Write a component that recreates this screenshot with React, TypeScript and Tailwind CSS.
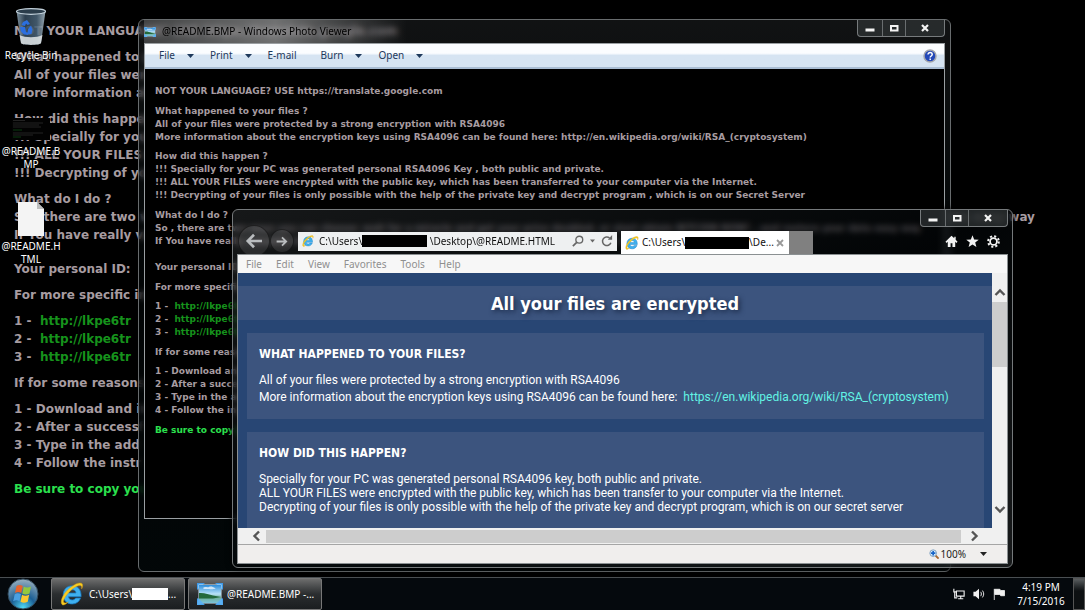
import type { ReactNode } from "react";

type Line = string | { text: string; green?: boolean; prefix?: string };

const note: Line[][] = [
  ["NOT YOUR LANGUAGE? USE https://translate.google.com"],
  [
    "What happened to your files ?",
    "All of your files were protected by a strong encryption with RSA4096",
    "More information about the encryption keys using RSA4096 can be found here: http://en.wikipedia.org/wiki/RSA_(cryptosystem)",
  ],
  [
    "How did this happen ?",
    "!!! Specially for your PC was generated personal RSA4096 Key , both public and private.",
    "!!! ALL YOUR FILES were encrypted with the public key, which has been transferred to your computer via the Internet.",
    "!!! Decrypting of your files is only possible with the help of the private key and decrypt program , which is on our Secret Server",
  ],
  [
    "What do I do ?",
    "So , there are two ways you can choose: wait for a miracle and get your price doubled, or start obtain BITCOIN NOW! , and restore your data easy way",
    "If You have really valuable data, you better not waste your time, because there is no other way to get your files",
  ],
  ["Your personal ID:"],
  ["For more specific inst"],
  [
    { prefix: "1 -", text: "http://lkpe6tr" },
    { prefix: "2 -", text: "http://lkpe6tr" },
    { prefix: "3 -", text: "http://lkpe6tr" },
  ],
  ["If for some reasons"],
  ["1 - Download and in", "2 - After a successf", "3 - Type in the add", "4 - Follow the instr"],
  [{ text: "Be sure to copy you", green: true }],
];

const ui = "font-['Noto_Sans','Open_Sans',sans-serif]";

function NoteText({ className }: { className: string }) {
  return (
    <div className={`font-['DejaVu_Sans',sans-serif] font-bold whitespace-nowrap text-[#a79ca1] ${className}`}>
      {note.map((lines, i) => (
        <div key={i}>
          {lines.map((line, j) => {
            if (typeof line === "string") return <p key={j}>{line}</p>;
            if (line.green) return <p key={j} className="text-[#2be04e]">{line.text}</p>;
            return (
              <p key={j}>
                {line.prefix}&nbsp; <span className="text-[#16931c]">{line.text}</span>
              </p>
            );
          })}
        </div>
      ))}
    </div>
  );
}

function Caret({ className = "w-[7px]" }: { className?: string }) {
  return (
    <svg viewBox="0 0 7 4" className={`h-1 ${className}`} aria-hidden="true">
      <path d="M0 0h7L3.5 4z" fill="currentColor" />
    </svg>
  );
}

function WindowButtons() {
  const cell = "flex h-4 items-center justify-center border-r border-[#6a6e70]";
  return (
    <div className="flex rounded-b-[4px] border border-t-0 border-[#777b7d] bg-[#303436]/70">
      <button aria-label="Minimize" className={`${cell} w-[25px]`}>
        <svg viewBox="0 0 10 10" className="size-2.5"><path d="M.5 5.5h9v3h-9z" fill="#f4f4f4" /></svg>
      </button>
      <button aria-label="Maximize" className={`${cell} w-[23px]`}>
        <svg viewBox="0 0 10 10" className="size-2.5"><path d="M2 3h6.500v4.500H2z" fill="none" stroke="#f4f4f4" strokeWidth="2" /></svg>
      </button>
      <button aria-label="Close" className="flex h-4 w-[38px] items-center justify-center">
        <svg viewBox="0 0 10 10" className="size-2.5"><path d="M2 2l6 6M8 2l-6 6" stroke="#f4f4f4" strokeWidth="2.200" /></svg>
      </button>
    </div>
  );
}

function IeIcon({ className }: { className: string }) {
  return (
    <svg viewBox="1.500 1 21.500 22.500" className={className} aria-hidden="true">
      <path d="M20.800 14.800H9c.3 2 1.700 3 3.500 3 1.500 0 2.500-.6 3.200-1.700h4.600C19 19.600 16.200 21.600 12.500 21.600c-5 0-8.500-3.500-8.500-8.500s3.500-8.600 8.400-8.600c5.300 0 8.700 3.700 8.400 10.300zM9 11.300h7c-.2-1.900-1.500-3-3.400-3-2 0-3.300 1.100-3.600 3z" fill="#3fb0ee" stroke="#1679c2" strokeWidth=".7" />
      <path d="M3.500 22.500c-3-1.300-.8-8.800 4.600-14C13.500 3.200 19.500.5 21.600 2.500c1 1 .7 3-.3 5 .1-1.600 0-2.600-.7-3-1.800-1.200-6.300 1.200-10.400 5.300C5.700 14.300 3.300 19 4.700 20.300c.8.8 2.300.4 4.100-.6-2.200 1.900-4.100 3.200-5.300 2.800z" fill="#f8cd22" stroke="#d79a0d" strokeWidth=".4" />
    </svg>
  );
}

function PhotoIcon({ className }: { className: string }) {
  return (
    <svg viewBox="0 0 26 22" className={className} aria-hidden="true">
      <defs>
        <linearGradient id="sky" x1="0" y1="0" x2="0" y2="1">
          <stop offset="0" stopColor="#2d8ddb" />
          <stop offset=".5" stopColor="#b9e2f8" />
          <stop offset=".7" stopColor="#6fae9a" />
          <stop offset="1" stopColor="#7cc3d8" />
        </linearGradient>
      </defs>
      <path d="M0 0h8l-8 7zM26 0h-8l8 7zM0 22h8l-8-7zM26 22h-8l8-7z" fill="#3f9bea" />
      <path d="M1.500 1.500h23v19h-23z" fill="#cfe6f5" />
      <path d="M2 2h22v18H2z" fill="url(#sky)" />
      <path d="M2 10c5-.5 10 1.300 14 2.500l8 1.500-8 1.500H2z" fill="#23693c" />
      <path d="M6 5c2-2 4 0 6-1s4 0 6 1-3 1.500-6 1S7 7 6 5z" fill="#fff" opacity=".7" />
      <path d="M0 22l7-1-6-6zM26 22l-7-1 6-6z" fill="#5cb0f2" />
    </svg>
  );
}

function DesktopIcon({ icon, lines }: { icon: ReactNode; lines: string[] }) {
  return (
    <button className={`flex w-[62px] flex-col items-center text-[10px] leading-[13px] text-white [text-shadow:0_1px_2px_#000] ${ui}`}>
      {icon}
      {lines.map((l) => (
        <span key={l} className="whitespace-nowrap">{l}</span>
      ))}
    </button>
  );
}

function DesktopIcons() {
  return (
    <div className="absolute top-2 left-0 flex flex-col">
      <DesktopIcon
        lines={["Recycle Bin"]}
        icon={
          <svg viewBox="0 0 32 38" className="mb-[3px] h-[38px] w-8" aria-hidden="true">
            <defs>
              <linearGradient id="bin" x1="0" x2="1" y1="0" y2="0">
                <stop offset="0" stopColor="#8da3b3" />
                <stop offset=".3" stopColor="#33485a" />
                <stop offset=".7" stopColor="#4a6377" />
                <stop offset="1" stopColor="#aabdc9" />
              </linearGradient>
            </defs>
            <path d="M1.500 3L6 35c1 2.500 19 2.500 20 0L30.500 3z" fill="url(#bin)" opacity=".88" />
            <path d="M4.500 27L6 35c1 2.500 19 2.500 20 0l1.500-8c-6 3-17 3-23 0z" fill="#e2e6e8" opacity=".85" />
            <ellipse cx="16" cy="3.500" rx="14.500" ry="2.800" fill="#2b3d4b" stroke="#c3d2dc" strokeWidth="1.200" />
            <path d="M8 14l4-2 3 4-2.500 1-1.500-1.500-1 2.500-3.500-1zM5 19l5 0 1 5 2 1v2l-4-.5-3-3zM13 21l3-3.500 1.500 4-1 4.500-4 .5v-2z" fill="#2c6fe0" />
          </svg>
        }
      />
      <DesktopIcon
        lines={["@README.B", "MP"]}
        icon={
          <svg viewBox="0 0 38 22" className="mt-14 mb-[5px] h-[22px] w-[38px]" aria-hidden="true">
            <path d="M0 0h38v22H0z" fill="#020202" />
            <path d="M1 2.500h12M1 5h30M1 7h26M1 9h28M1 15h30M1 17h20" stroke="#2b2b2b" strokeWidth=".8" />
            <path d="M1 12h9M1 19h8" stroke="#0d4a14" strokeWidth=".8" />
          </svg>
        }
      />
      <DesktopIcon
        lines={["@README.H", "TML"]}
        icon={
          <svg viewBox="0 0 28 36" className="mt-[30px] mb-[3px] h-9 w-7" aria-hidden="true">
            <path d="M1 1h19l7 7v27H1z" fill="#f4f4f4" />
            <path d="M20 1v7h7z" fill="#bdbdbd" />
          </svg>
        }
      />
    </div>
  );
}

const viewerMenu = [
  { label: "File", caret: true },
  { label: "Print", caret: true },
  { label: "E-mail", caret: false },
  { label: "Burn", caret: true },
  { label: "Open", caret: true },
];

function PhotoViewer() {
  return (
    <section className="absolute top-[19px] right-[134px] bottom-[5px] left-[138px] flex flex-col rounded-md border border-[#686c6e] bg-gradient-to-b from-[#2a2e30]/40 via-[#03080a]/50 to-[#020708]/95 px-[5px] pb-[52px] backdrop-blur-[3px]">
      <header className={`flex h-[23px] items-start text-[10px] text-black ${ui}`}>
        <div className="flex h-full items-center gap-1 bg-gradient-to-r from-white/20 via-white/40 to-transparent pr-14">
          <PhotoIcon className="h-2.5 w-3" />
          <span className="ml-0.5">@README.BMP - Windows Photo Viewer</span>
        </div>
        <div className="ml-auto">
          <WindowButtons />
        </div>
      </header>
      <div className="flex min-h-0 flex-1 flex-col border border-[#9a9fa2] bg-black">
        <nav className={`flex h-[25px] shrink-0 items-center border-b-2 border-[#a9bdd3] bg-gradient-to-b from-[#fbfdff] from-40% to-[#d6e4f2] to-50% pr-[7px] pl-[14px] text-[10px] text-[#1e395b] ${ui}`}>
          {viewerMenu.map((m) => (
            <button key={m.label} className={`flex items-center gap-3 ${m.caret ? "mr-4" : "mr-6"}`}>
              {m.label}
              {m.caret && <Caret />}
            </button>
          ))}
          <button aria-label="Help" className="ml-auto">
            <svg viewBox="0 0 14 14" className="size-3.5">
              <circle cx="7" cy="7" r="6" fill="#2449b8" stroke="#a4a6ac" strokeWidth="1.500" />
              <path d="M5 5.500c0-2.600 4.200-2.500 4.200 0C9.200 7 7.200 7 7.200 8.500M7.200 9.500v1.500" fill="none" stroke="#fff" strokeWidth="1.500" />
            </svg>
          </button>
        </nav>
        <div className="min-h-0 flex-1 overflow-hidden pt-2.5 pl-2.5">
          <NoteText className="text-[9px] leading-[13px] [&>div:nth-child(5)]:mt-[13px]! [&>div:nth-child(even)]:mt-[7px] [&>div:nth-child(odd)]:mt-1.5" />
        </div>
      </div>
    </section>
  );
}

function Chevron({ d }: { d: string }) {
  return (
    <svg viewBox="0 0 12 12" className="size-3" aria-hidden="true">
      <path d={d} fill="none" stroke="#555" strokeWidth="2.400" />
    </svg>
  );
}

function Browser() {
  return (
    <section className="absolute top-[209px] right-[72px] bottom-[9px] left-[232px] flex flex-col rounded-md border border-[#75797b] bg-gradient-to-br from-[#2c3032]/50 via-[#05090c]/50 to-[#303436]/50 px-1 pb-[3px] shadow-[0_0_6px_#000] backdrop-blur-[3px]">
      <header className={`flex h-11 shrink-0 text-[10px] text-[#111] ${ui}`}>
        <div className="flex min-w-0 max-w-[380px] flex-1 items-center pt-[18px]">
          <button aria-label="Back" className="ml-px flex size-8 shrink-0 items-center justify-center rounded-full border border-black/50 bg-white/10">
            <svg viewBox="0 0 20 18" className="h-4 w-[18px]"><path d="M10 2L3 9l7 7M3 9h16" fill="none" stroke="#b9bcbe" strokeWidth="3" /></svg>
          </button>
          <button aria-label="Forward" className="flex size-6 shrink-0 items-center justify-center rounded-full border border-black/50 bg-white/10">
            <svg viewBox="0 0 20 18" className="h-[11px] w-3"><path d="M10 2l7 7-7 7M17 9H1" fill="none" stroke="#b9bcbe" strokeWidth="3" /></svg>
          </button>
          <form className="relative ml-1 flex h-[19px] min-w-0 flex-1 items-center bg-[#eef0f1] pl-1">
            <IeIcon className="size-3 shrink-0" />
            <input aria-label="Address" defaultValue={"C:\\Users\\                          \\Desktop\\@README.HTML"} className="ml-[5px] min-w-0 flex-1 outline-none" />
            <span className="absolute left-[64px] h-3 w-[65px] bg-black" />
            <button type="button" aria-label="Search">
              <svg viewBox="0 0 14 14" className="size-3"><circle cx="8.500" cy="5.500" r="4" fill="none" stroke="#666" strokeWidth="1.600" /><path d="M5.500 8.500L1 13" stroke="#666" strokeWidth="2" /></svg>
            </button>
            <Caret className="mx-1.5 w-[5px] text-[#666]" />
            <button type="button" aria-label="Refresh" className="mr-1">
              <svg viewBox="0 0 14 14" className="size-3"><path d="M11.500 9A5 5 0 1 1 10 3.500" fill="none" stroke="#666" strokeWidth="1.800" /><path d="M8 5.500h5V0z" fill="#666" /></svg>
            </button>
          </form>
        </div>
        <div className="mt-[21px] ml-1 flex w-[168px] items-center bg-white px-1">
          <IeIcon className="size-3.5 shrink-0" />
          <span className="ml-[3px]">C:\Users\</span>
          <span className="h-3 w-16 bg-black" />
          <span>\De...</span>
          <button aria-label="Close tab" className="ml-auto">
            <svg viewBox="0 0 10 10" className="size-2.5"><path d="M2 2l6 6M8 2l-6 6" stroke="#999" strokeWidth="1.800" /></svg>
          </button>
        </div>
        <button aria-label="New tab" className="mt-[21px] w-6 bg-[#808080]" />
        <div className="ml-auto flex flex-col items-end gap-2">
          <WindowButtons />
          <div className="flex items-center gap-2 pr-2 text-[#f2f2f2]">
            <button aria-label="Home">
              <svg viewBox="0 0 14 14" className="size-[13px]" fill="currentColor"><path d="M7 .8L.5 7.300l1.200 1.200L3 7.300V13h3V9h2v4h3V7.300l1.300 1.200 1.200-1.200L11.500 5V2H10v1.500z" /></svg>
            </button>
            <button aria-label="Favorites">
              <svg viewBox="0 0 14 14" className="size-[13px]" fill="currentColor"><path d="M7 .3l1.800 4.600 4.900.2-3.800 3.100 1.300 4.800L7 10.300 2.800 13l1.300-4.800L.3 5.100l4.900-.2z" /></svg>
            </button>
            <button aria-label="Tools">
              <svg viewBox="0 0 14 14" className="size-[13px]"><circle cx="7" cy="7" r="3.700" fill="none" stroke="currentColor" strokeWidth="1.900" /><circle cx="7" cy="7" r="5.700" fill="none" stroke="currentColor" strokeWidth="2.200" strokeDasharray="2.240 2.240" /></svg>
            </button>
          </div>
        </div>
      </header>
      <div className="flex min-h-0 flex-1 flex-col border border-[#8b9092] bg-[#f0eeed]">
        <nav className={`flex h-[18px] shrink-0 items-center gap-[14px] bg-[#f7f7f7] pl-2 text-[10px] text-[#8f8f8f] ${ui}`}>
          {["File", "Edit", "View", "Favorites", "Tools", "Help"].map((m) => (
            <button key={m}>{m}</button>
          ))}
        </nav>
        <div className="flex min-h-0 flex-1">
          <main className="min-w-0 flex-1 overflow-hidden bg-[#284674] pt-[13px] font-['Roboto','Noto_Sans',sans-serif] text-[12px] text-white">
            <h1 className="bg-[#3c547e] pt-0.5 text-center font-['DejaVu_Sans_Condensed',sans-serif] text-[18px] leading-8 font-bold [text-shadow:2px_2px_5px_#1a2a48]">
              All your files are encrypted
            </h1>
            <article className="mr-2 ml-[9px] mt-[13px] h-[86px] bg-[#3c547e] px-3 pt-[13px]">
              <h2 className="mb-[9px] font-['DejaVu_Sans_Condensed',sans-serif] leading-[17px] font-bold">WHAT HAPPENED TO YOUR FILES?</h2>
              <p className="leading-[17px] whitespace-nowrap">
                All of your files were protected by a strong encryption with RSA4096
                <br />
                More information about the encryption keys using RSA4096 can be found here: &nbsp;
                <a href="#wiki" className="text-[#62f3e4]">https://en.wikipedia.org/wiki/RSA_(cryptosystem)</a>
              </p>
            </article>
            <article className="mr-2 ml-[9px] mt-[13px] h-[120px] bg-[#3c547e] px-3 pt-[13px]">
              <h2 className="mb-2.5 font-['DejaVu_Sans_Condensed',sans-serif] leading-[17px] font-bold">HOW DID THIS HAPPEN?</h2>
              <p className="leading-[14px] whitespace-nowrap">
                Specially for your PC was generated personal RSA4096 key, both public and private.
                <br />
                ALL YOUR FILES were encrypted with the public key, which has been transfer to your computer via the Internet.
                <br />
                Decrypting of your files is only possible with the help of the private key and decrypt program, which is on our secret server
              </p>
            </article>
          </main>
          <div className="flex w-[15px] shrink-0 flex-col items-center bg-[#f0f0f0]">
            <button aria-label="Scroll up" className="flex h-[29px] items-end pb-1">
              <Chevron d="M1.500 9L6 4.500 10.500 9" />
            </button>
            <div className="h-[65px] w-full bg-[#cdcdcd]" />
            <button aria-label="Scroll down" className="mt-auto flex h-6">
              <Chevron d="M1.500 3L6 7.500 10.500 3" />
            </button>
          </div>
        </div>
        <div className="flex h-4 shrink-0 items-center bg-[#f0f0f0] pr-3">
          <button aria-label="Scroll left" className="flex w-7 justify-center pl-2">
            <Chevron d="M9 1.500L4.500 6 9 10.500" />
          </button>
          <div className="h-[13px] flex-1 bg-[#cdcdcd]" />
          <button aria-label="Scroll right" className="flex w-[34px] pl-2">
            <Chevron d="M3 1.500L7.500 6 3 10.500" />
          </button>
        </div>
        <footer className={`flex h-[19px] shrink-0 items-center justify-end border-t border-[#a5a5a5] pr-5 text-[10px] text-[#222] ${ui}`}>
          <button className="flex items-center gap-0.5">
            <svg viewBox="0 0 12 12" className="size-2.5"><path d="M7.500 7.500l4 4" stroke="#a8672d" strokeWidth="2.200" /><circle cx="5" cy="5" r="4" fill="#d8ecfb" stroke="#6f95b8" /><path d="M5 2.300v5.400M2.300 5h5.400" stroke="#1763c6" strokeWidth="2" /></svg>
            100%
            <Caret className="ml-3 w-[7px]" />
          </button>
        </footer>
      </div>
    </section>
  );
}

const task = "flex w-[134px] items-center rounded-[2px] border border-[#777] bg-gradient-to-b from-[#6d6d6d] via-[#2b2e30] to-[#1b1e20] whitespace-nowrap text-white";

function Taskbar() {
  return (
    <footer className={`relative flex h-[33px] shrink-0 border-t border-[#4a4f52] bg-[#05090d] text-[10px] text-white ${ui}`}>
      <button aria-label="Start" className="mr-3 ml-[7px]">
        <svg viewBox="0 0 32 32" className="size-8">
          <defs>
            <radialGradient id="orb" cx=".5" cy=".95" r=".9">
              <stop offset="0" stopColor="#4fd8f5" />
              <stop offset=".45" stopColor="#1c5f94" />
              <stop offset="1" stopColor="#8fa9bb" />
            </radialGradient>
          </defs>
          <circle cx="16" cy="16" r="15" fill="url(#orb)" stroke="#31495a" />
          <path d="M9.500 8c2-1.400 4.200-1.400 6.300 0l-1.500 7c-2-1.400-4.300-1.400-6.300 0z" fill="#e8632c" />
          <path d="M16.800 8.500c2.200 1.400 4.500 1.400 7.200 0l-1.500 7c-2.700 1.400-5 1.400-7.200 0z" fill="#93c83e" />
          <path d="M7.700 16.200c2-1.400 4.200-1.400 6.300 0l-1.500 7c-2-1.400-4.300-1.400-6.300 0z" fill="#4aa0e2" />
          <path d="M15 16.700c2.200 1.400 4.500 1.400 7.200 0l-1.500 7c-2.700 1.400-5 1.400-7.200 0z" fill="#fbc72f" />
        </svg>
      </button>
      <button className={`${task} pl-2`}>
        <IeIcon className="size-6 shrink-0" />
        <span className="ml-[5px]">C:\Users\</span>
        <span className="h-3 w-9 bg-white" />
        <span>...</span>
      </button>
      <button className={`${task} ml-[3px] pl-2`}>
        <PhotoIcon className="h-[22px] w-[26px] shrink-0" />
        <span className="ml-1">@README.BMP -...</span>
      </button>
      <div className="ml-auto flex items-center gap-2">
        <svg viewBox="0 0 14 14" className="size-3"><path d="M4 3.500h9v6H4zM6 12.500h6M9 10v2.500M1 1v3.500h3M2 4v7.500h3" fill="none" stroke="#f0f0f0" strokeWidth="1.300" /></svg>
        <svg viewBox="0 0 14 14" className="size-3"><path d="M.5 4.500H3L7 1v12L3 9.500H.5z" fill="#f0f0f0" /><path d="M9 4.500c1 1.500 1 3.500 0 5M11 3c2 2.500 2 5.500 0 8" fill="none" stroke="#f0f0f0" strokeWidth="1.100" /></svg>
        <svg viewBox="0 0 14 14" className="size-3"><path d="M1.500 1v13M2 1.500h6l1 1.500h4.500v6H9L8 7.500H2z" fill="#f0f0f0" stroke="#f0f0f0" /></svg>
      </div>
      <div className="ml-3 flex w-12 flex-col items-center justify-center leading-[14px]">
        <time>4:19 PM</time>
        <time>7/15/2016</time>
      </div>
      <button aria-label="Show desktop" className="ml-2 w-3 border border-[#555] bg-gradient-to-b from-[#5b5f61] to-[#0d1012] to-40%" />
    </footer>
  );
}

export default function App() {
  return (
    <div className="flex h-screen flex-col overflow-hidden bg-black">
      <div className="relative min-h-0 flex-1 overflow-hidden pt-[22px] pl-3.5">
        <NoteText className="text-[12px] leading-[18px] [&>div+div]:mt-2 [&>div:nth-child(5)]:mt-4" />
        <DesktopIcons />
        <PhotoViewer />
        <Browser />
      </div>
      <Taskbar />
    </div>
  );
}
